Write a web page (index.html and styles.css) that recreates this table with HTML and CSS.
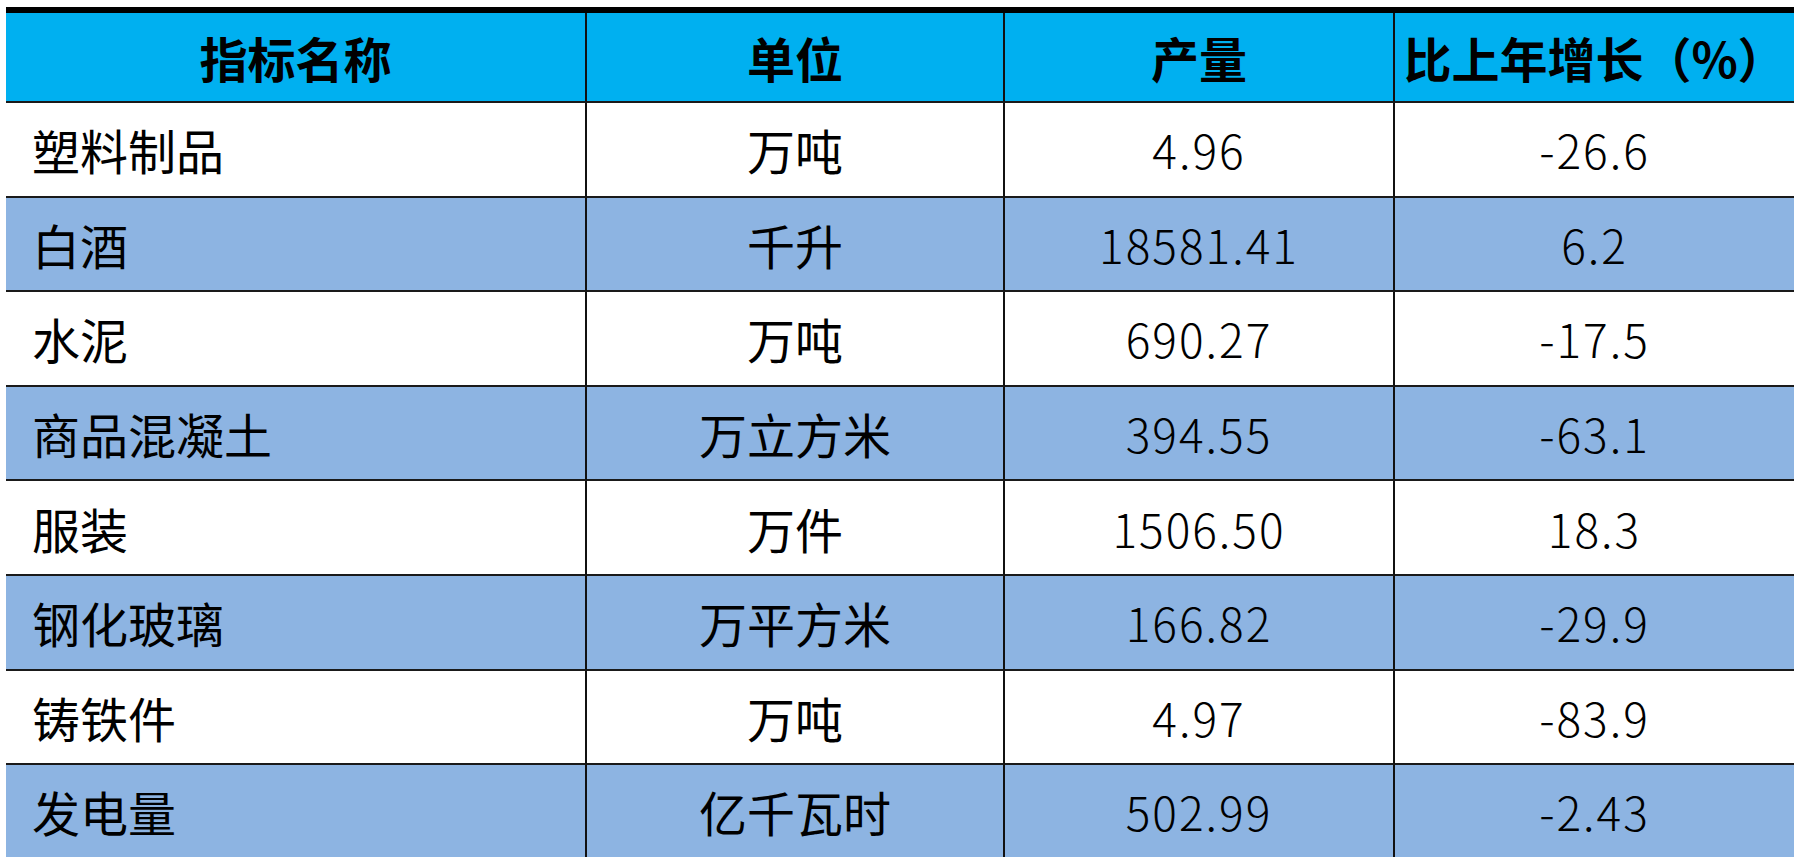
FILE: index.html
```html
<!DOCTYPE html>
<html lang="zh-CN">
<head>
<meta charset="utf-8">
<title>主要工业产品产量</title>
<link rel="stylesheet" href="styles.css">
</head>
<body>
<div class="table">
  <div class="cell head">指标名称</div>
  <div class="cell head">单位</div>
  <div class="cell head">产量</div>
  <div class="cell head last">比上年增长（%）</div>

  <div class="cell name">塑料制品</div>
  <div class="cell">万吨</div>
  <div class="cell num">4.96</div>
  <div class="cell num last">-26.6</div>

  <div class="cell name alt">白酒</div>
  <div class="cell alt">千升</div>
  <div class="cell num alt">18581.41</div>
  <div class="cell num alt last">6.2</div>

  <div class="cell name">水泥</div>
  <div class="cell">万吨</div>
  <div class="cell num">690.27</div>
  <div class="cell num last">-17.5</div>

  <div class="cell name alt">商品混凝土</div>
  <div class="cell alt">万立方米</div>
  <div class="cell num alt">394.55</div>
  <div class="cell num alt last">-63.1</div>

  <div class="cell name">服装</div>
  <div class="cell">万件</div>
  <div class="cell num">1506.50</div>
  <div class="cell num last">18.3</div>

  <div class="cell name alt">钢化玻璃</div>
  <div class="cell alt">万平方米</div>
  <div class="cell num alt">166.82</div>
  <div class="cell num alt last">-29.9</div>

  <div class="cell name">铸铁件</div>
  <div class="cell">万吨</div>
  <div class="cell num">4.97</div>
  <div class="cell num last">-83.9</div>

  <div class="cell name alt">发电量</div>
  <div class="cell alt">亿千瓦时</div>
  <div class="cell num alt">502.99</div>
  <div class="cell num alt last">-2.43</div>
</div>
</body>
</html>
```

FILE: styles.css
```css
html, body {
  margin: 0;
  padding: 0;
  background: #ffffff;
  overflow: hidden;
}

body {
  font-family: "Noto Sans CJK SC", "Noto Sans", sans-serif;
  color: #000000;
}

.table {
  margin: 7px 0 0 6px;
  width: 1788px;
  display: grid;
  grid-template-columns: 581px 418px 390px 399px;
  grid-template-rows: 90px repeat(8, 94.6px);
  border-top: 6px solid #000000;
}

.cell {
  box-sizing: border-box;
  display: flex;
  align-items: center;
  justify-content: center;
  border-right: 2px solid #111111;
  border-bottom: 2px solid #1a1a1a;
  font-size: 48px;
  line-height: 1;
  font-weight: 400;
  background: #ffffff;
  white-space: nowrap;
}

.cell.last {
  border-right: none;
}

.head {
  background: #00b0f0;
  font-weight: 700;
}

.alt {
  background: #8db4e2;
}

.name {
  justify-content: flex-start;
  padding-left: 26px;
}

.num {
  font-size: 46px;
  font-weight: 300;
  letter-spacing: 2px;
}
```
